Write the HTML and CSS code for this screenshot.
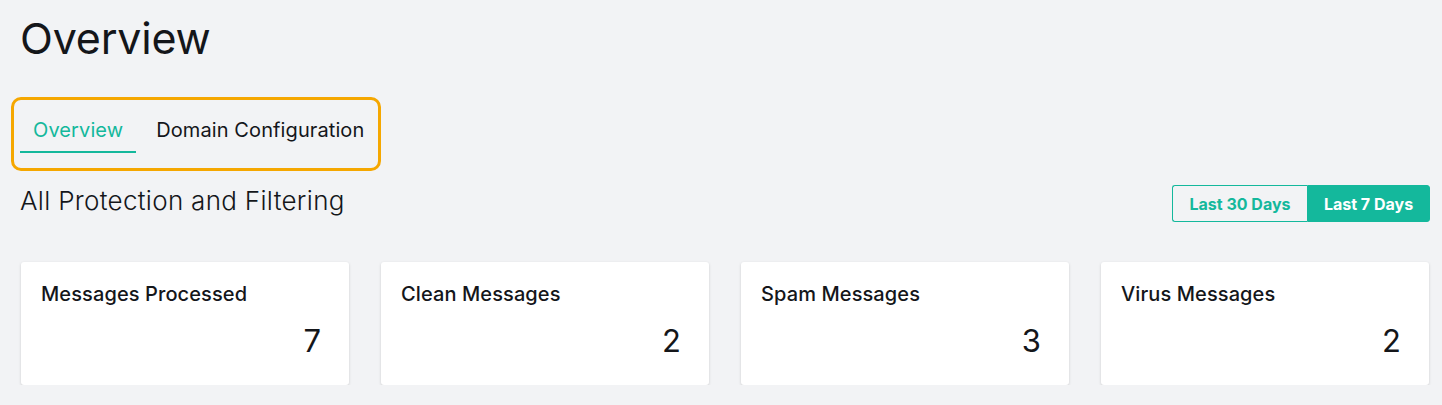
FILE: index.html
```html
<!DOCTYPE html>
<html lang="en">
<head>
<meta charset="utf-8">
<title>Overview</title>
<link rel="stylesheet" href="styles.css">
</head>
<body>
<main class="page">
  <h1 class="page-title">Overview</h1>
  <nav class="tabs">
    <a class="tab tab-active">Overview</a>
    <a class="tab">Domain Configuration</a>
  </nav>
  <section class="section">
    <div class="section-head">
      <h2 class="section-title">All Protection and Filtering</h2>
      <div class="range">
        <button class="range-btn">Last 30 Days</button>
        <button class="range-btn range-btn-active">Last 7 Days</button>
      </div>
    </div>
    <div class="cards">
      <div class="card">
        <div class="card-title">Messages Processed</div>
        <div class="card-value">7</div>
      </div>
      <div class="card">
        <div class="card-title">Clean Messages</div>
        <div class="card-value">2</div>
      </div>
      <div class="card">
        <div class="card-title">Spam Messages</div>
        <div class="card-value">3</div>
      </div>
      <div class="card">
        <div class="card-title">Virus Messages</div>
        <div class="card-value">2</div>
      </div>
    </div>
  </section>
</main>
</body>
</html>
```

FILE: styles.css
```css
* { box-sizing: border-box; }

html, body {
  margin: 0;
  background: #f2f3f5;
  font-family: Inter, "Noto Sans", "Liberation Sans", sans-serif;
  color: #14161a;
}

.page {
  padding: 12px 12px 0 20px;
}

.page-title {
  margin: 0;
  font-size: 43px;
  font-weight: 400;
  line-height: 52px;
  letter-spacing: -0.2px;
}

.tabs {
  display: inline-flex;
  gap: 7px;
  margin: 33px 0 0 -9px;
  padding: 0 0 15px 6px;
  border: 3px solid #f5a700;
  border-radius: 10px;
  width: 370px;
  height: 74px;
  align-items: flex-end;
}

.tab {
  padding: 0 13px 2px;
  font-size: 20px;
  line-height: 38px;
  letter-spacing: 0.1px;
  color: #14161a;
  border-bottom: 2px solid transparent;
  cursor: pointer;
  white-space: nowrap;
}

.tab-active {
  color: #14b89c;
  border-bottom-color: #14b89c;
}

.section-head {
  display: flex;
  justify-content: space-between;
  align-items: flex-start;
  margin-top: 14px;
}

.section-title {
  margin: 0;
  font-size: 26px;
  font-weight: 300;
  line-height: 32px;
  letter-spacing: 0.3px;
}

.range {
  display: flex;
}

.range-btn {
  height: 37px;
  padding: 0;
  font-family: inherit;
  font-size: 16px;
  font-weight: 700;
  color: #14b89c;
  background: transparent;
  border: 1px solid #14b89c;
  border-radius: 3px 0 0 3px;
  cursor: pointer;
}

.range-btn:first-child {
  width: 135px;
  border-right: none;
}

.range-btn-active {
  width: 123px;
  color: #ffffff;
  background: #14b89c;
  border-radius: 0 3px 3px 0;
}

.cards {
  display: grid;
  grid-template-columns: repeat(4, 1fr);
  gap: 32px;
  margin: 40px 1px 0 1px;
}

.card {
  height: 123px;
  background: #ffffff;
  border-radius: 3px;
  box-shadow: 0 1px 3px rgba(0, 0, 0, 0.16);
  padding: 20px 28px 0 20px;
  display: flex;
  flex-direction: column;
}

.card-title {
  font-size: 20px;
  font-weight: 500;
  line-height: 24px;
  letter-spacing: 0.1px;
}

.card-value {
  margin-top: 15px;
  text-align: right;
  font-size: 31px;
  line-height: 40px;
}
```
